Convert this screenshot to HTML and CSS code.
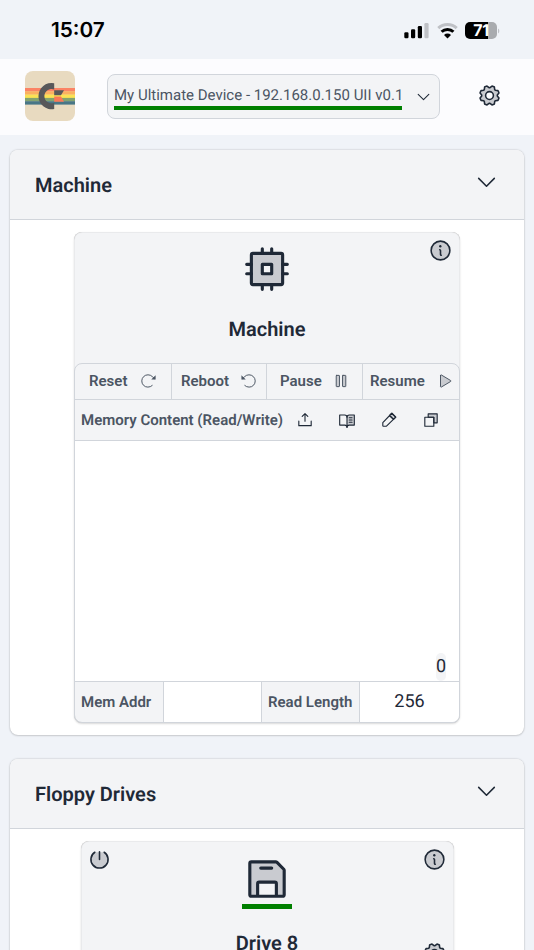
FILE: index.html
```html
<!DOCTYPE html>
<html lang="en">
<head>
    <meta charset="UTF-8">
    <meta name="viewport" content="width=device-width, initial-scale=1.0">
    <title>My Ultimate Device</title>
    <link rel="stylesheet" href="styles.css">
</head>
<body>
<svg class="symbols" aria-hidden="true">
    <symbol id="caret" viewBox="0 0 256 256">
        <polyline points="208 96 128 176 48 96"/>
    </symbol>
    <symbol id="gear" viewBox="0 0 256 256">
        <path class="shade" fill-rule="evenodd" d="M41.43,178.09A99.14,99.14,0,0,1,31.36,153.8l16.78-21a81.59,81.59,0,0,1,0-9.64l-16.77-21a99.43,99.43,0,0,1,10.05-24.3l26.71-3a81,81,0,0,1,6.81-6.81l3-26.7A99.14,99.14,0,0,1,102.2,31.36l21,16.78a81.59,81.59,0,0,1,9.64,0l21-16.77a99.43,99.43,0,0,1,24.3,10.05l3,26.71a81,81,0,0,1,6.81,6.81l26.7,3a99.14,99.14,0,0,1,10.07,24.29l-16.78,21a81.59,81.59,0,0,1,0,9.64l16.77,21a99.43,99.43,0,0,1-10,24.3l-26.71,3a81,81,0,0,1-6.81,6.81l-3,26.7a99.14,99.14,0,0,1-24.29,10.07l-21-16.78a81.59,81.59,0,0,1-9.64,0l-21,16.77a99.43,99.43,0,0,1-24.3-10l-3-26.71a81,81,0,0,1-6.81-6.81ZM128,88a40,40,0,1,0,0,80a40,40,0,1,0,0-80Z"/>
    </symbol>
    <symbol id="info" viewBox="0 0 256 256">
        <circle class="shade" cx="128" cy="128" r="96"/>
        <path d="M120,120a8,8,0,0,1,8,8v40a8,8,0,0,0,8,8"/>
        <circle class="dot" cx="126" cy="84" r="12"/>
    </symbol>
</svg>

<div class="status-bar">
    <span class="time">15:07</span>
    <div class="status-icons">
        <svg width="25" height="18" viewBox="0 0 25 18">
            <rect x="0.3" y="10.3" width="4.2" height="6" rx="1.2"/>
            <rect x="7" y="7.3" width="4.2" height="9" rx="1.2"/>
            <rect x="13.8" y="4" width="4.2" height="12.3" rx="1.2"/>
            <rect class="off" x="20.4" y="1" width="4.2" height="15.3" rx="1.2"/>
        </svg>
        <svg class="wifi" width="21" height="18" viewBox="0 0 21 18">
            <path class="off-line" d="M1.3 6.2a13.2 13.2 0 0 1 18.4 0"/>
            <path class="on-line" d="M4.6 9.8a8.4 8.4 0 0 1 11.8 0"/>
            <path d="M10.5 16.4L7 12.9a5 5 0 0 1 7 0Z"/>
        </svg>
        <div class="battery"><span>71</span></div>
        <svg class="nub" width="2" height="6" viewBox="0 0 2 6"><path class="off" d="M0 0.5a3 3 0 0 1 0 5z"/></svg>
    </div>
</div>

<header class="header">
    <svg class="logo" width="50" height="50" viewBox="0 0 50 50">
        <rect width="50" height="50" fill="#e8dac0"/>
        <rect y="17" width="50" height="3.4" fill="#fb8365"/>
        <rect y="20.3" width="50" height="3.4" fill="#fbb060"/>
        <rect y="23.6" width="50" height="3.4" fill="#fbe254"/>
        <rect y="26.9" width="50" height="3.4" fill="#83a370"/>
        <rect y="30.2" width="50" height="3.4" fill="#487686"/>
        <path fill="#58585a" d="M29.2 12.2V18.4A7.2 7.2 0 1 0 29.2 31.8V38.1A13.2 13.2 0 1 1 29.2 12.2Z"/>
        <path fill="#58585a" d="M29.2 19.3H39L36 24.3H29.2Z"/>
        <path fill="#fb7857" d="M29.2 25.6H36L39 30.8H29.2Z"/>
    </svg>
    <div class="device">
        <span class="device-name">My Ultimate Device - 192.168.0.150 UII v0.1</span>
        <svg class="icon select-caret"><use href="#caret"/></svg>
    </div>
    <svg class="icon"><use href="#gear"/></svg>
</header>

<main>
    <section class="panel">
        <div class="panel-header">
            <h2>Machine</h2>
            <svg class="icon"><use href="#caret"/></svg>
        </div>
        <div class="panel-body">
            <div class="card">
                <div class="card-top">
                    <svg class="icon corner-right"><use href="#info"/></svg>
                    <svg class="icon big" viewBox="0 0 256 256">
                        <path class="shade" fill-rule="evenodd" d="M56 48H200a8 8 0 0 1 8 8V200a8 8 0 0 1-8 8H56a8 8 0 0 1-8-8V56a8 8 0 0 1 8-8ZM104 104V152H152V104Z"/>
                        <path d="M104 48V24M152 48V24M104 232V208M152 232V208M208 104H232M208 152H232M24 104H48M24 152H48"/>
                    </svg>
                    <h3>Machine</h3>
                </div>
                <div class="controls">
                    <div class="buttons">
                        <button>Reset
                            <svg class="icon small thin" viewBox="0 0 256 256"><path d="M188 192a88 88 0 1 1 2-126L224 98"/><path class="solid" d="M236 46V108H174Z"/></svg>
                        </button>
                        <button>Reboot
                            <svg class="icon small thin" viewBox="0 0 256 256"><path d="M68 192a88 88 0 1 0-2-126L32 98"/><path class="solid" d="M20 46V108H82Z"/></svg>
                        </button>
                        <button>Pause
                            <svg class="icon small thin" viewBox="0 0 256 256"><rect class="shade" x="60" y="48" width="46" height="160" rx="6"/><rect class="shade" x="150" y="48" width="46" height="160" rx="6"/></svg>
                        </button>
                        <button>Resume
                            <svg class="icon small thin" viewBox="0 0 256 256"><path class="shade" d="M64 49V207a8 8 0 0 0 12 7L208 135a8 8 0 0 0 0-14L76 42a8 8 0 0 0-12 7Z"/></svg>
                        </button>
                    </div>
                    <div class="memory-bar">
                        <span>Memory Content (Read/Write)</span>
                        <svg class="icon small" viewBox="0 0 256 256"><path d="M128 144V36M88 76l40-40 40 40M216 144v64H40v-64"/></svg>
                        <svg class="icon small" viewBox="0 0 256 256"><path class="shade" d="M128 88a32 32 0 0 1 32-32h72V200H160a32 32 0 0 0-32 32Z"/><path d="M128 88A32 32 0 0 0 96 56H24V200H96a32 32 0 0 1 32 32M160 96h40M160 128h40M160 160h40"/></svg>
                        <svg class="icon small" viewBox="0 0 256 256"><path class="shade" d="M136 64l32-32 56 56-32 32Z"/><path d="M92 216H48a8 8 0 0 1-8-8V164L168 32l56 56ZM136 64l56 56"/></svg>
                        <svg class="icon small" viewBox="0 0 256 256"><path class="shade" d="M216 40V168H168V88H88V40Z"/><path d="M40 88H168V216H40Z"/></svg>
                    </div>
                    <div class="memory"><span>0</span></div>
                    <div class="fields">
                        <label>Mem Addr</label>
                        <div class="value"></div>
                        <label>Read Length</label>
                        <div class="value">256</div>
                    </div>
                </div>
            </div>
        </div>
    </section>

    <section class="panel">
        <div class="panel-header">
            <h2>Floppy Drives</h2>
            <svg class="icon"><use href="#caret"/></svg>
        </div>
        <div class="panel-body">
            <div class="card drive">
                <div class="card-top">
                    <svg class="icon corner-left" viewBox="0 0 256 256">
                        <path class="shade" d="M176 54a88 88 0 1 1-96 0"/>
                        <path d="M128 48V128"/>
                    </svg>
                    <svg class="icon corner-right"><use href="#info"/></svg>
                    <svg class="icon big online" viewBox="0 0 256 256">
                        <path class="fill" d="M216 83V208a8 8 0 0 1-8 8H176V144H80v72H48a8 8 0 0 1-8-8V48a8 8 0 0 1 8-8H173a8 8 0 0 1 5 2l36 36a8 8 0 0 1 2 5Z"/>
                        <path d="M216 83V208a8 8 0 0 1-8 8H48a8 8 0 0 1-8-8V48a8 8 0 0 1 8-8H173a8 8 0 0 1 5 2l36 36a8 8 0 0 1 2 5ZM80 216V152a8 8 0 0 1 8-8h80a8 8 0 0 1 8 8v64M152 72H96"/>
                    </svg>
                    <h3>Drive 8</h3>
                    <svg class="icon corner-gear"><use href="#gear"/></svg>
                </div>
            </div>
        </div>
    </section>
</main>
</body>
</html>
```

FILE: styles.css
```css
* {
    box-sizing: border-box;
}

body {
    font-family: Roboto, sans-serif;
    margin: 0;
    height: 950px;
    overflow: hidden;
    background-color: #f0f3f8;
    color: #1f2937;
    text-rendering: geometricPrecision;
}

h2,
h3 {
    margin: 0;
    font-size: 20px;
    line-height: 28px;
    font-weight: 600;
}

/* icons */
.symbols {
    position: absolute;
    width: 0;
    height: 0;
}

.icon {
    display: block;
    flex: none;
    width: 25px;
    height: 25px;
    fill: none;
    stroke: #1f2937;
    stroke-width: 16;
    stroke-linecap: round;
    stroke-linejoin: round;
}

.icon.small {
    width: 18px;
    height: 18px;
}

.icon.thin {
    stroke: #4b5563;
    stroke-width: 14;
}

.icon.big {
    width: 50px;
    height: 50px;
}

.shade,
.fill {
    fill: #c9cbd0;
}

.fill {
    stroke: none;
}

.dot {
    fill: #1f2937;
    stroke: none;
}

.solid {
    fill: #4b5563;
    stroke: none;
}

/* status bar */
.status-bar {
    display: flex;
    justify-content: space-between;
    height: 59px;
    padding: 18px 34px 0 51px;
}

.time {
    font-family: Inter, sans-serif;
    font-size: 20.8px;
    line-height: 26px;
    font-weight: 600;
    color: #000;
}

.status-icons {
    display: flex;
    padding-top: 4px;
}

.wifi {
    margin: 0 7px 0 8px;
}

.off {
    fill: #bfc1c6;
}

.off-line,
.on-line {
    fill: none;
    stroke: #bfc1c6;
    stroke-width: 3;
}

.on-line {
    stroke: #000;
}

.battery {
    width: 32px;
    height: 17px;
    border-radius: 5px;
    background: linear-gradient(to right, #000 23px, #a9abaf 23px);
    color: #fff;
    font: 700 16px/17px Inter, sans-serif;
    text-align: center;
    letter-spacing: -0.3px;
}

.nub {
    margin: 6px 0 0 1px;
}

/* header */
.header {
    display: flex;
    align-items: center;
    height: 76px;
    padding: 0 32px 2px 25px;
    background-color: #fcfcfe;
}

.logo {
    border-radius: 8px;
}

.device {
    display: flex;
    align-items: center;
    width: 333px;
    height: 45px;
    margin: 0 37px 0 32px;
    padding: 0 7px 0 6px;
    border: 1px solid #d1d5db;
    border-radius: 8px;
    background-color: #f3f4f6;
}

.device-name {
    width: 288px;
    height: 27px;
    padding-top: 3px;
    border-bottom: 4px solid #008000;
    color: #4b5563;
    font-size: 15px;
    line-height: 18px;
    white-space: nowrap;
}

.icon.select-caret {
    width: 17px;
    height: 17px;
    margin-left: 13px;
}

.header > .icon {
    margin-bottom: 1px;
}

/* panels */
main {
    display: flex;
    flex-direction: column;
    gap: 24px;
    padding: 15px 10px 0;
}

.panel {
    flex: none;
    border-radius: 8px;
    background-color: #fff;
    box-shadow: 0 0 2px rgba(0, 0, 0, 0.25), 0 1px 2px rgba(0, 0, 0, 0.1);
}

.panel-header {
    display: flex;
    align-items: center;
    justify-content: space-between;
    height: 70px;
    padding: 0 25px;
    border-bottom: 1px solid #d1d5db;
    border-radius: 8px 8px 0 0;
    background-color: #f3f4f6;
}

.panel-header .icon {
    margin-bottom: 6px;
}

.panel-body {
    padding: 12px 0;
}

.card {
    width: 386px;
    margin: 0 auto;
    border-radius: 8px;
    background-color: #f3f4f6;
    box-shadow: inset 0 0 1px rgba(0, 0, 0, 0.4), 0 1px 2px rgba(0, 0, 0, 0.15);
}

.card-top {
    position: relative;
    display: flex;
    flex-direction: column;
    align-items: center;
    gap: 21px;
    height: 131px;
    padding-top: 12px;
}

.corner-right,
.corner-left,
.corner-gear {
    position: absolute;
    top: 6px;
    right: 7px;
}

.corner-left {
    right: auto;
    left: 6px;
}

.corner-gear {
    top: 100px;
}

.controls {
    border: 1px solid #d1d5db;
    border-radius: 8px;
    overflow: hidden;
    color: #4b5563;
    font-size: 15px;
    font-weight: 600;
}

.buttons {
    display: grid;
    grid-template-columns: 97px 95px 96px 96px;
    height: 35px;
}

.buttons button {
    display: flex;
    align-items: center;
    justify-content: space-between;
    padding: 0 14px 1px;
    border: 0;
    border-right: 1px solid #d1d5db;
    background: none;
    color: inherit;
    font: inherit;
}

.buttons button:nth-child(2) {
    padding: 0 8px 1px 9px;
}

.buttons button:nth-child(3) {
    padding: 0 12px 1px 13px;
}

.buttons button:last-child {
    padding: 0 5px 1px 7px;
    border-right: 0;
}

.memory-bar {
    display: flex;
    align-items: center;
    height: 42px;
    padding-left: 6px;
    border: 1px solid #d1d5db;
    border-width: 1px 0;
    gap: 24px;
}

.memory-bar span {
    width: 215px;
    margin-right: -24px;
    white-space: nowrap;
}

.memory {
    display: flex;
    align-items: flex-end;
    justify-content: flex-end;
    height: 240px;
    padding: 0 13px 0;
    background-color: #fff;
    color: #1f2937;
    font-size: 18px;
    font-weight: 400;
}

.memory span {
    border-radius: 5px;
    background-color: #f3f4f6;
    line-height: 28px;
}

.fields {
    display: grid;
    grid-template-columns: 89px 98px 98px 99px;
    height: 41px;
    border-top: 1px solid #d1d5db;
    line-height: 40px;
}

.fields label {
    padding-left: 6px;
    border-right: 1px solid #d1d5db;
    white-space: nowrap;
}

.fields .value {
    border-right: 1px solid #d1d5db;
    background-color: #fff;
    color: #1f2937;
    font-size: 18px;
    font-weight: 400;
    line-height: 40px;
    text-align: center;
}

.fields .value:last-child {
    border-right: 0;
}

.card.drive {
    width: 373px;
}

.drive .card-top {
    gap: 25px;
    padding-top: 13px;
}

.online {
    box-shadow: 0 5px 0 #008000;
}
```
